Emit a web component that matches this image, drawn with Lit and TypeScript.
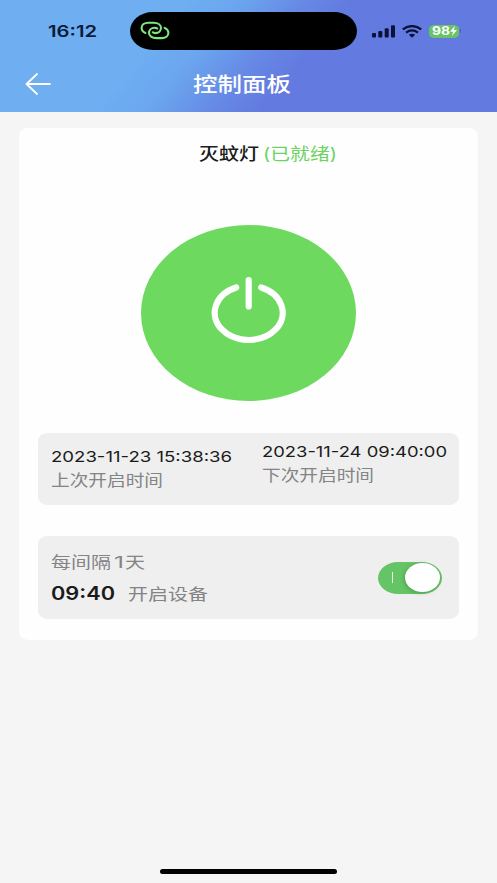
import { LitElement, html, svg, css } from "lit";
import { customElement, property } from "lit/decorators.js";

/** One line of text fitted to a given width, for the wide letterforms of the panel. */
@customElement("wide-text")
class WideText extends LitElement {
  @property() text = "";
  @property({ type: Number }) width = 100;
  @property({ type: Number }) size = 15;
  @property({ type: Number }) height = 20;

  static styles = css`
    :host { display: block; flex: none; }
    svg { display: block; overflow: visible; }
    text { fill: currentColor; white-space: pre; }
  `;

  render() {
    return html`<svg width=${this.width} height=${this.height}>
      ${svg`<text x="0" y=${this.height - 4} font-size=${this.size} textLength=${this.width} lengthAdjust="spacingAndGlyphs">${this.text}</text>`}
    </svg>`;
  }
}

@customElement("app-root")
class AppRoot extends LitElement {
  static styles = css`
    :host {
      display: flex; flex-direction: column; position: relative;
      width: 497px; height: 883px; box-sizing: border-box; overflow: hidden;
      background: #f5f5f5; color: #1b1b1b;
      font-family: Inter, "Noto Sans CJK SC", sans-serif;
    }
    svg { display: block; flex: none; }
    header {
      height: 112px; flex: none;
      background: linear-gradient(130deg, #6eaef1 32%, #6ba5ee 41%, #6688e5 52%, #637ae0 60%);
    }
    .status { display: flex; align-items: center; height: 62px; padding-left: 48px; box-sizing: border-box; }
    .clock { color: #0b1c38; font-weight: 600; width: 82px; }
    .island {
      width: 227px; height: 38px; border-radius: 23px / 19px; background: #000;
      display: flex; align-items: center; padding-left: 10px; box-sizing: border-box;
    }
    .signals { display: flex; align-items: center; margin-left: 15px; }
    .wifi { margin-left: 7px; }
    .battery {
      display: flex; align-items: center; width: 30px; height: 13px; margin-left: 7px;
      border-radius: 5px / 4px; background: #66c466; color: #fff; font-weight: 700;
      padding-left: 3px; box-sizing: border-box;
    }
    .tip { width: 1px; height: 4px; margin-left: 1px; background: #4d62b8; }
    .nav { display: flex; align-items: center; height: 44px; padding-left: 25px; }
    .nav wide-text { color: #fff; font-weight: 500; margin-left: 142px; }
    .card {
      margin: 16px 19px 0; height: 512px; background: #fefefe; border-radius: 9px 9px 10px 10px / 8px;
      padding: 14px 19px 0; box-sizing: border-box;
    }
    .title { display: flex; padding-left: 161px; gap: 4px; height: 22px; }
    .name { font-weight: 500; }
    .ready { color: #6bd360; font-weight: 400; }
    .power {
      width: 215px; height: 176px; border-radius: 50%; margin: 61px 0 0 103px;
      background: #6dd95f; display: flex; align-items: center; justify-content: center;
      padding-bottom: 8px; box-sizing: border-box;
    }
    .panel { background: #efefef; border-radius: 10px / 8px; box-sizing: border-box; }
    .times { display: flex; height: 72px; margin-top: 32px; padding: 13px 0 0 13px; gap: 30px; }
    .next { margin-top: -5px; }
    .grey { color: #848484; font-weight: 400; }
    .times .grey { margin-top: 4px; }
    .schedule {
      display: flex; align-items: center; justify-content: space-between;
      height: 83px; margin-top: 31px; padding: 0 17px 0 13px;
    }
    .row { display: flex; gap: 13px; margin-top: 12px; }
    .every { display: flex; }
    .digit { margin: 0 1px 0 3px; }
    .at { font-weight: 600; }
    .switch {
      width: 64px; height: 32px; border-radius: 20px / 16px; background: #65c466;
      display: flex; align-items: center; justify-content: space-between;
      padding: 0 2px 0 14px; box-sizing: border-box;
    }
    .mark { width: 1px; height: 11px; background: #e8f8e8; }
    .knob { width: 35px; height: 29px; border-radius: 50%; background: #fff; box-shadow: -1px 1px 4px #0003; }
    .home { width: 177px; height: 5px; border-radius: 3px; background: #000; margin: auto auto 9px 160px; }
  `;

  render() {
    return html`
      <header>
        <div class="status">
          <wide-text class="clock" text="16:12" .width=${49} .size=${16} .height=${20}></wide-text>
          <div class="island">
            <svg width="30" height="20" viewBox="0 0 30 20" fill="none" stroke="#7de67c" stroke-width="2.1" stroke-linecap="round">
              <path d="M5.4 12C2.8 10.8 1.6 9 1.6 7C1.6 3.8 4.4 1.8 8.4 1.8H13.5C18.2 1.8 21 4 21 6.8C21 10 18.6 12.1 15.4 12.1C14.2 12.1 13.4 11.9 12.8 11.3"/>
              <path d="M24.6 6.9C27.2 8.1 28.4 9.9 28.4 11.7C28.4 15.1 25.6 17.1 21.6 17.1H16.5C11.8 17.1 9 14.9 9 12.1C9 8.9 11.4 6.8 14.6 6.8C15.8 6.8 16.6 7 17.2 7.6"/>
            </svg>
          </div>
          <div class="signals">
            <svg width="23" height="13" viewBox="0 0 23 13" fill="#0b1238">
              <rect x="0" y="8" width="4" height="4.5" rx="1"/><rect x="6.3" y="6" width="4" height="6.5" rx="1"/>
              <rect x="12.7" y="3.2" width="4" height="9.3" rx="1"/><rect x="19" y="0.3" width="4" height="12.2" rx="1"/>
            </svg>
            <svg class="wifi" width="20" height="13" viewBox="0 0 20 13" fill="none" stroke="#0b1238" stroke-width="2.3">
              <path d="M.8 4.4Q10-2.2 19.2 4.4"/><path d="M4 7.6Q10 3.2 16 7.6"/>
              <path d="M6.8 9.8Q10 7.6 13.2 9.8L10 12.7Z" fill="#0b1238" stroke="none"/>
            </svg>
            <div class="battery">
              <wide-text text="98" .width=${18} .size=${11.5} .height=${16}></wide-text>
              <svg width="7" height="10" viewBox="0 0 7 10" fill="#fff"><path d="M4.7 0L0 5.7H3L2 10L7 4.1H4Z"/></svg>
            </div>
            <div class="tip"></div>
          </div>
        </div>
        <div class="nav">
          <svg width="26" height="22" viewBox="0 0 26 22" fill="none" stroke="#fff" stroke-width="1.8" stroke-linecap="round" stroke-linejoin="round">
            <path d="M12 1L1.5 11L12 21M1.5 11H25"/>
          </svg>
          <wide-text text="控制面板" .width=${98} .size=${20} .height=${24}></wide-text>
        </div>
      </header>
      <main class="card">
        <div class="title">
          <wide-text class="name" text="灭蚊灯" .width=${60} .size=${16.5} .height=${22}></wide-text>
          <wide-text class="ready" text="(已就绪)" .width=${74} .size=${16.5} .height=${22}></wide-text>
        </div>
        <div class="power">
          <svg width="76" height="68" viewBox="0 0 76 68" fill="none" stroke="#fff" stroke-width="6.2" stroke-linecap="round">
            <path d="M25.2 12.5A34 27.2 0 1 0 50.2 12.5" />
            <path d="M37.7 5V31.5"/>
          </svg>
        </div>
        <section class="panel times">
          <div>
            <wide-text text="2023-11-23 15:38:36" .width=${181} .size=${15} .height=${20}></wide-text>
            <wide-text class="grey" text="上次开启时间" .width=${112} .size=${15.5} .height=${20}></wide-text>
          </div>
          <div class="next">
            <wide-text text="2023-11-24 09:40:00" .width=${185} .size=${15} .height=${20}></wide-text>
            <wide-text class="grey" text="下次开启时间" .width=${112} .size=${15.5} .height=${20}></wide-text>
          </div>
        </section>
        <section class="panel schedule">
          <div>
            <div class="every">
              <wide-text class="grey" text="每间隔" .width=${60} .size=${15.5} .height=${20}></wide-text>
              <wide-text class="grey digit" text="1" .width=${10} .size=${15.5} .height=${20}></wide-text>
              <wide-text class="grey" text="天" .width=${20} .size=${15.5} .height=${20}></wide-text>
            </div>
            <div class="row">
              <wide-text class="at" text="09:40" .width=${64} .size=${18.5} .height=${20}></wide-text>
              <wide-text class="grey" text="开启设备" .width=${80} .size=${16} .height=${20}></wide-text>
            </div>
          </div>
          <div class="switch"><div class="mark"></div><div class="knob"></div></div>
        </section>
      </main>
      <div class="home"></div>
    `;
  }
}
